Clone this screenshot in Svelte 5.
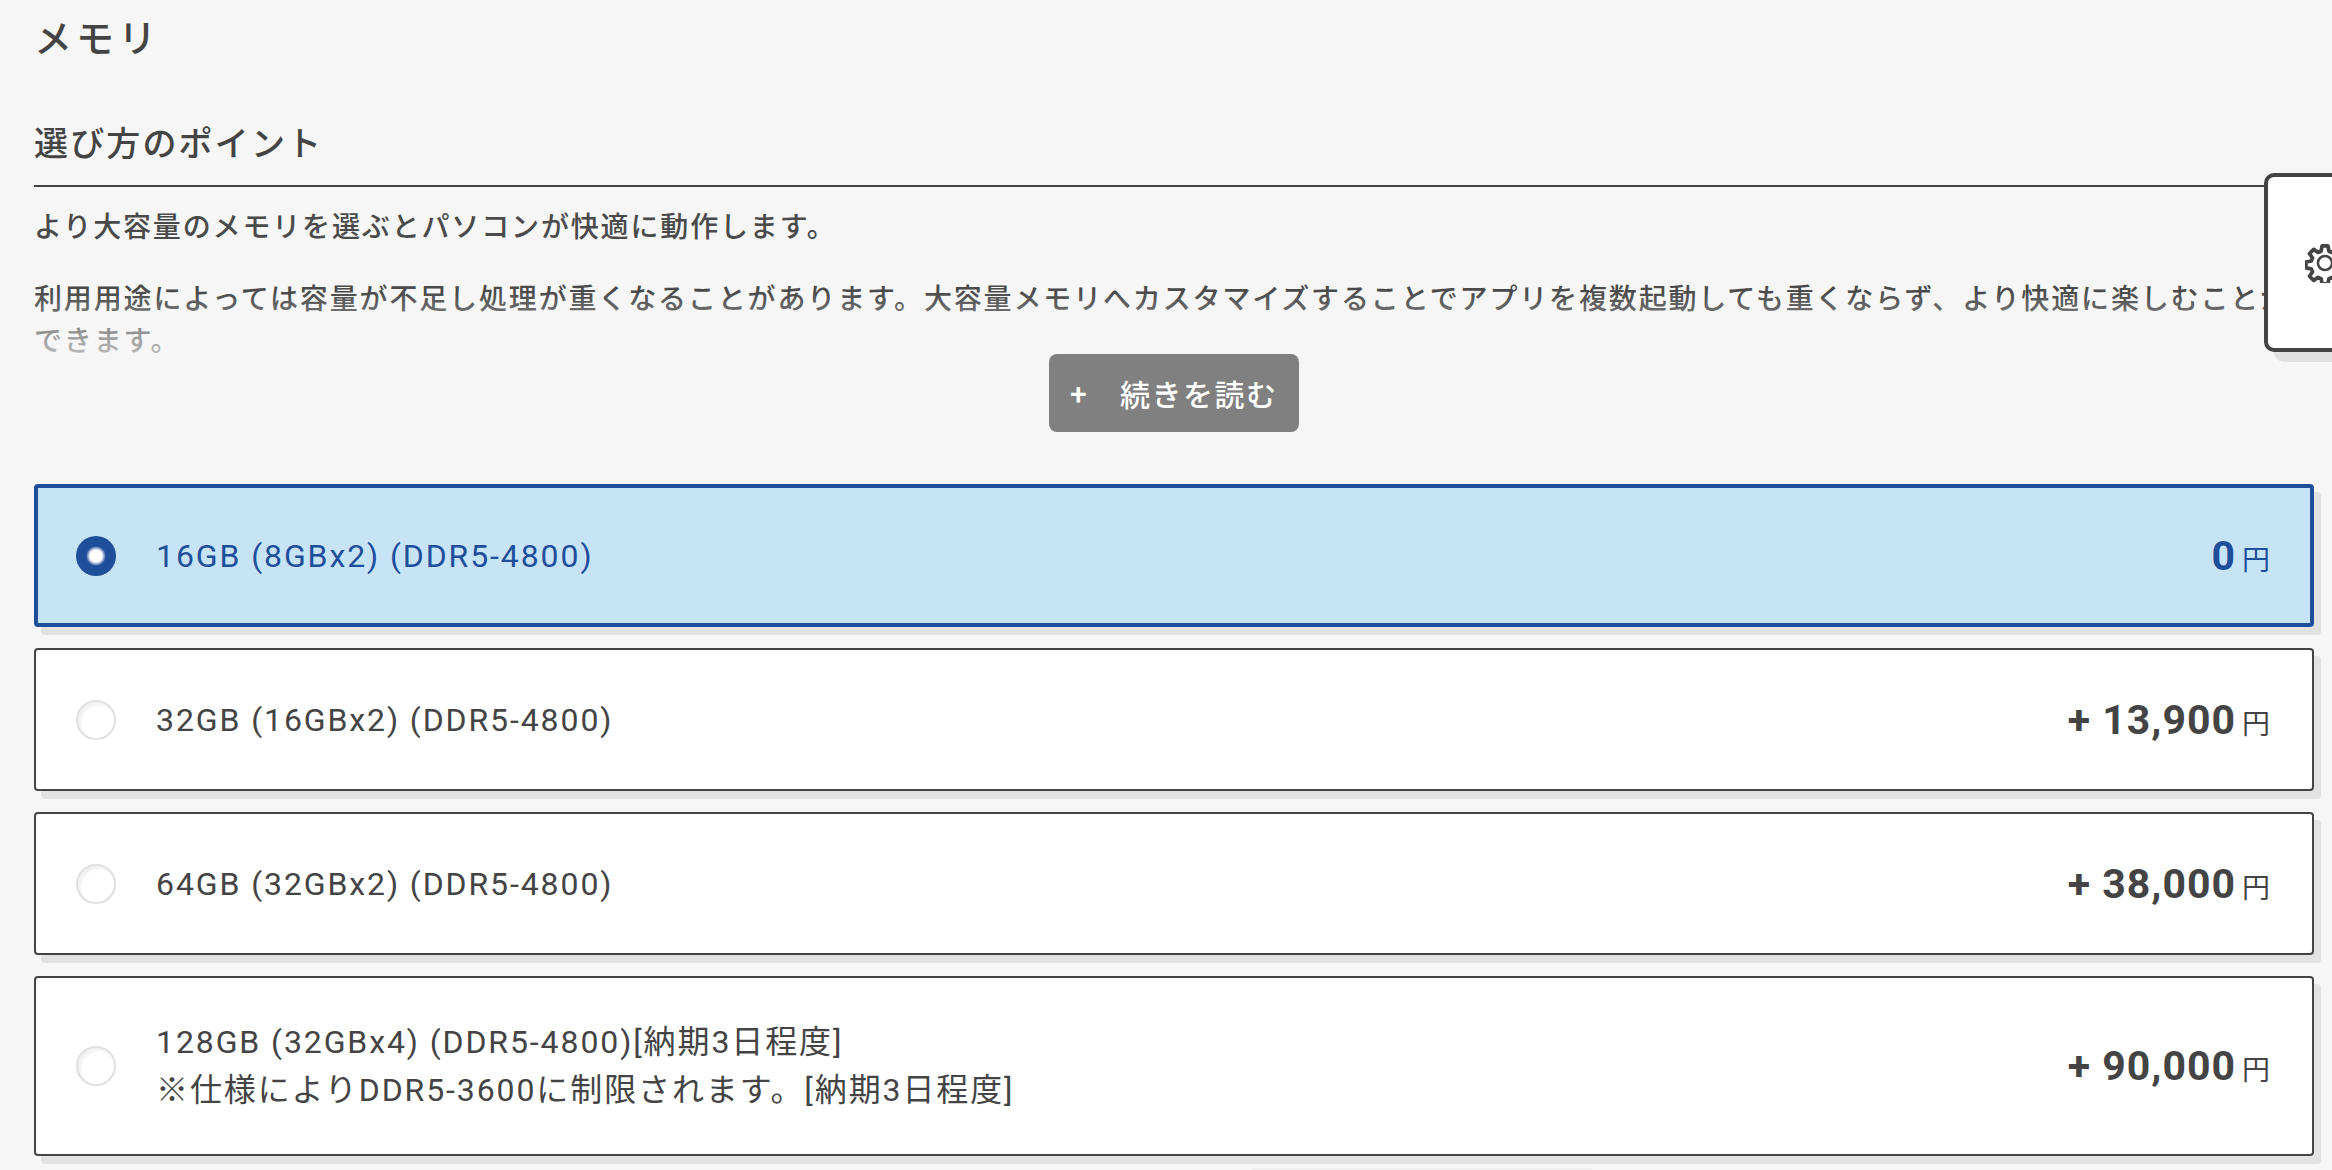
<script>
  const options = [
    { id: 'm16', lines: ['16GB (8GBx2) (DDR5-4800)'], price: '0', selected: true },
    { id: 'm32', lines: ['32GB (16GBx2) (DDR5-4800)'], price: '+ 13,900' },
    { id: 'm64', lines: ['64GB (32GBx2) (DDR5-4800)'], price: '+ 38,000' },
    {
      id: 'm128',
      lines: ['128GB (32GBx4) (DDR5-4800)[納期3日程度]', '※仕様によりDDR5-3600に制限されます。[納期3日程度]'],
      price: '+ 90,000'
    }
  ];
</script>

<main>
  <h1>メモリ</h1>

  <section class="guide">
    <h2>選び方のポイント</h2>
    <div class="guide-body">
      <p>より大容量のメモリを選ぶとパソコンが快適に動作します。</p>
      <p>利用用途によっては容量が不足し処理が重くなることがあります。大容量メモリへカスタマイズすることでアプリを複数起動しても重くならず、より快適に楽しむことができます。</p>
      <div class="fade"></div>
    </div>
    <button class="more" type="button"><span class="plus">+</span>続きを読む</button>
  </section>

  <div class="options">
    {#each options as opt}
      <label class="option" class:selected={opt.selected}>
        <span class="radio"></span>
        <span class="name">
          {#each opt.lines as line}
            <span class="line">{line}</span>
          {/each}
        </span>
        <span class="price"><b>{opt.price}</b><small>円</small></span>
      </label>
    {/each}
  </div>
  <div class="next"></div>
</main>

<aside class="tool">
  <svg viewBox="0 0 48 48" width="40" height="40" aria-hidden="true">
    <path d="M20.5 3.5h7l1.2 6.3 3.6 1.5 5.3-3.6 5 5-3.6 5.3 1.5 3.6 6.3 1.2v7l-6.3 1.2-1.5 3.6 3.6 5.3-5 5-5.3-3.6-3.6 1.5-1.2 6.3h-7l-1.2-6.3-3.6-1.5-5.3 3.6-5-5 3.6-5.3-1.5-3.6-6.3-1.2v-7l6.3-1.2 1.5-3.6-3.6-5.3 5-5 5.3 3.6 3.6-1.5z" />
    <circle cx="24" cy="24" r="8.5" />
  </svg>
</aside>

<style>
  :global(body) {
    margin: 0;
    background: #f6f6f6;
    color: #444;
    font-family: Roboto, 'Noto Sans CJK JP', sans-serif;
    overflow: hidden;
  }
  :global(*) { box-sizing: border-box; }
  main { padding: 0 18px 0 34px; height: 1170px; overflow: hidden; }
  h1 {
    margin: 0;
    padding-top: 16px;
    font-size: 38px;
    line-height: 46px;
    font-weight: 500;
    letter-spacing: 4.1px;
  }
  h2 {
    margin: 59px 0 0;
    padding-bottom: 18px;
    border-bottom: 2px solid #444;
    font-size: 34px;
    line-height: 46px;
    font-weight: 500;
    letter-spacing: 2.15px;
  }
  .guide { display: flex; flex-direction: column; }
  .guide-body {
    position: relative;
    height: 167px;
    overflow: hidden;
    padding-top: 20px;
    font-size: 28px;
    font-weight: 500;
    line-height: 42px;
    letter-spacing: 1.85px;
    color: #4a4a4a;
  }
  .guide-body p { margin: 0 0 30px; }
  .fade {
    position: absolute;
    left: 0;
    right: 0;
    bottom: 0;
    height: 62px;
    background: linear-gradient(to bottom, rgba(246, 246, 246, 0), rgba(246, 246, 246, 0.65));
  }
  .more {
    align-self: center;
    height: 78px;
    width: 250px;
    padding: 0 0 0 21px;
    display: flex;
    align-items: center;
    border: 0;
    border-radius: 8px;
    background: #808080;
    color: #fff;
    font-family: inherit;
    font-size: 30px;
    font-weight: 500;
    letter-spacing: 1.5px;
  }
  .plus { width: 50px; text-align: left; }
  .options { margin-top: 52px; display: flex; flex-direction: column; gap: 21px; }
  .option {
    display: flex;
    align-items: center;
    min-height: 143px;
    padding: 40px 42px 40px 40px;
    background: #fff;
    border: 2px solid #444;
    border-radius: 4px;
    box-shadow: 7px 8px 0 #e2e2e2;
  }
  .option.selected {
    background: #c7e4f7;
    border: 4px solid #1f4e9b;
    color: #1f4e9b;
    padding-left: 38px;
    padding-right: 40px;
  }
  .radio {
    flex: none;
    width: 40px;
    height: 40px;
    margin-right: 40px;
    border-radius: 50%;
    background: #fff;
    border: 2px solid #e0e0e0;
    box-shadow: inset 3px 3px 3px rgba(0, 0, 0, 0.06);
  }
  .selected .radio {
    border: 0;
    background: radial-gradient(circle, #fff 0 6px, #1f4e9b 10px);
    box-shadow: none;
  }
  .name { flex: 1; font-size: 32px; line-height: 48px; letter-spacing: 1.9px; }
  .line { display: block; }
  .price { display: flex; align-items: baseline; }
  .price b { font-size: 41px; font-weight: 700; letter-spacing: 1px; }
  .price small { margin-left: 6px; font-size: 28px; }
  .next {
    width: 340px;
    height: 2px;
    margin: 12px 0 0 1218px;
    background: #efefef;
  }
  .tool {
    position: fixed;
    left: 2264px;
    top: 173px;
    width: 120px;
    height: 179px;
    display: flex;
    align-items: center;
    padding-left: 37px;
    background: #fff;
    border: 4px solid #444;
    border-radius: 10px;
    box-shadow: 10px 10px 0 #e2e2e2;
  }
  .tool svg { fill: none; stroke: #444; stroke-width: 4.5; stroke-linejoin: round; flex: none; }
  .tool circle { stroke-width: 3; }
</style>
